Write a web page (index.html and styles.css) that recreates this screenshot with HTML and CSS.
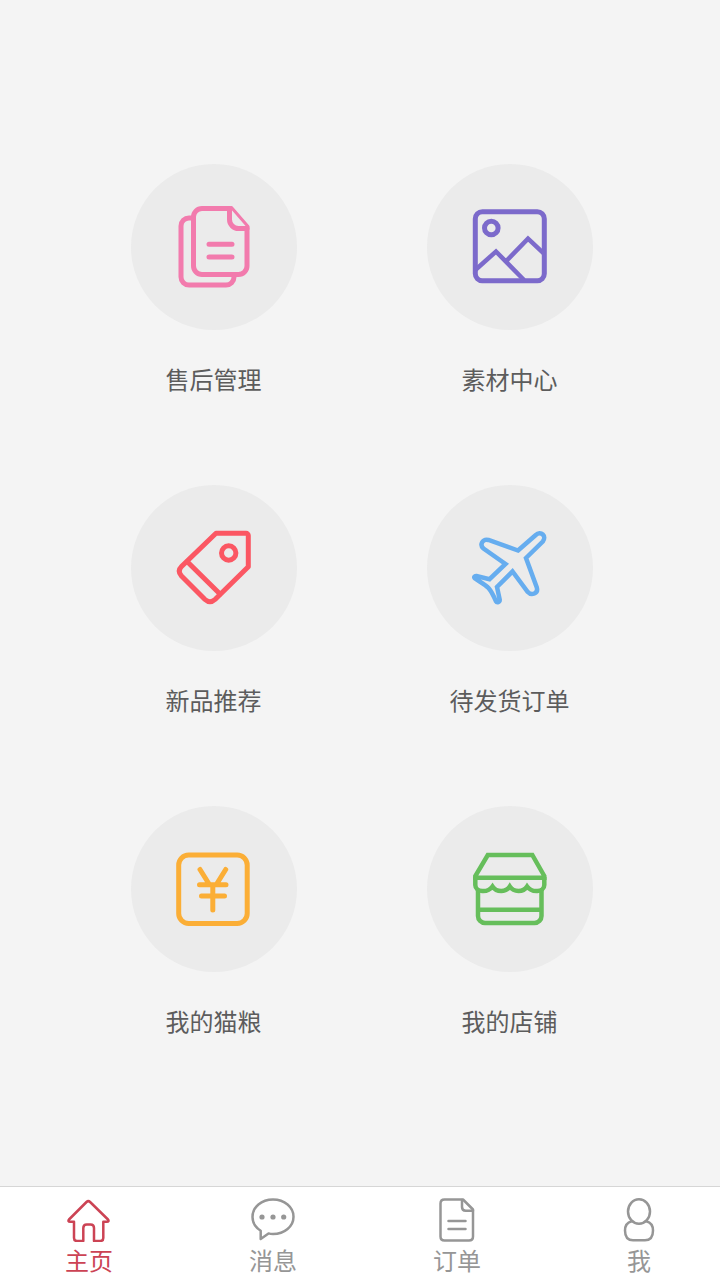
FILE: index.html
```
<!DOCTYPE html>
<html lang="zh-CN">

<head>
    <meta charset="UTF-8">
    <meta name="viewport" content="width=device-width, initial-scale=1.0">
    <title>主页</title>
    <link rel="stylesheet" href="styles.css">
</head>

<body>
    <main class="menu">
        <a class="item pink" href="#service">
            <span class="circle">
                <svg viewBox="0 0 166 166" aria-hidden="true">
                    <path d="M62 54h-4a8 8 0 0 0-8 8v51a8 8 0 0 0 8 8h37a8 8 0 0 0 8-8v-2" />
                    <path d="M99 44.5H71a8.5 8.5 0 0 0-8.5 8.5v49a8.5 8.5 0 0 0 8.5 8.5h36.5a8.5 8.5 0 0 0 8.5-8.5V64" />
                    <path d="M98.5 45v10.500a9 9 0 0 0 9 9h8.5M78 80.3h23M78 93h23" />
                    <path class="fold" d="M100.5 43.5L117 62.5" />
                </svg>
            </span>
            <span class="name">售后管理</span>
        </a>
        <a class="item purple" href="#material">
            <span class="circle">
                <svg viewBox="0 0 166 166" aria-hidden="true">
                    <rect x="48.3" y="47.7" width="69" height="69" rx="7" />
                    <circle cx="64.3" cy="64" r="6.8" />
                    <path class="sharp" d="M48.3 106L69 87.5l28 28.5M79 97.3l22-22.6 16.5 15.5" />
                </svg>
            </span>
            <span class="name">素材中心</span>
        </a>
        <a class="item red" href="#new">
            <span class="circle">
                <svg viewBox="0 0 166 166" aria-hidden="true">
                    <path d="M85 48.3h30a2.3 2.3 0 0 1 2.3 2.3V81.7L84 114.5q-5 4.5-10 0L50.5 91q-4.5-5 0-9.5z" />
                    <path d="M56.3 76.7L89 109" />
                    <circle cx="97.7" cy="68" r="7.2" />
                </svg>
            </span>
            <span class="name">新品推荐</span>
        </a>
        <a class="item blue" href="#shipping">
            <span class="circle">
                <svg viewBox="0 0 166 166" aria-hidden="true">
                    <path class="sharp" d="M91 65.5L108.500 50.2c5.500-5 11.500 1 7.300 6.300L99 73l10.800 29.5c1.700 6-5.300 8.500-9 4.500L85.500 86.5 70 102l2.700 12.500c.3 2.800-2.700 3.500-3.900 1.500-2.300-5.500-3.800-9-7.300-13-3.500-3.800-8.500-6-13.500-9.500-1.500-1.300-.5-2.700 1.500-2.500l13 3.200L78.500 79 56.500 63.500c-4.500-4-.5-10 5-8.500z" />
                </svg>
            </span>
            <span class="name">待发货订单</span>
        </a>
        <a class="item orange" href="#food">
            <span class="circle">
                <svg viewBox="0 0 166 166" aria-hidden="true">
                    <rect x="47.7" y="49" width="68.5" height="68.5" rx="10" />
                    <path d="M69 63.5l9.5 15.2M94.7 63.5l-9.500 15.2M68.5 78.7h26.5M70.5 90h23M81.8 79v25" />
                </svg>
            </span>
            <span class="name">我的猫粮</span>
        </a>
        <a class="item green" href="#shop">
            <span class="circle">
                <svg viewBox="0 0 166 166" aria-hidden="true">
                    <path class="sharp" d="M48.3 71.7V70l12.5-21h44.5L117.3 70v1.7zM51 84v26a7 7 0 0 0 7 7h49.5a7 7 0 0 0 7-7V84M51 103.7h63.5" />
                    <path class="sharp" d="M48.3 71v8c0 7.5 12.5 8 17.2 1.5 4 6 13.5 6 17.3 0 4 6 13.5 6 17.3 0 4.700 6.5 17.2 6 17.2-1.5v-8" />
                </svg>
            </span>
            <span class="name">我的店铺</span>
        </a>
    </main>

    <nav class="tabs">
        <a class="tab active" href="#home">
            <svg viewBox="0 0 44 44" aria-hidden="true">
                <path d="M19.5 4q1.8-1.7 3.6 0L41 21.5q1.5 2.2-1.2 2.3h-3.5V40q0 3-3 3H27V30q0-3.5-3.5-3.5h-3.7q-3.5 0-3.5 3.5v13H10q-3 0-3-3V23.8H3.2q-2.7-.1-1.2-2.3z" />
            </svg>
            <span>主页</span>
        </a>
        <a class="tab" href="#message">
            <svg viewBox="0 0 44 44" aria-hidden="true">
                <path d="M9.7 32.7C4.5 29.5 1.5 24.5 1.5 19 1.5 9 10.5 1.5 22 1.5S42.5 9 42.5 18.7 33.5 36 22 36q-2.5 0-4.5-.6L9.7 41z" />
                <g class="dots">
                    <circle cx="11" cy="19" r="2.6" />
                    <circle cx="22" cy="19" r="2.6" />
                    <circle cx="32.7" cy="19" r="2.6" />
                </g>
            </svg>
            <span>消息</span>
        </a>
        <a class="tab" href="#order">
            <svg viewBox="0 0 44 44" aria-hidden="true">
                <path d="M28 1.5H9.5q-4 0-4 4v33q0 4 4 4H34q4 0 4-4v-27z" />
                <path d="M27 2v7q0 3.7 3.7 3.7H38M13.5 23h17M13.5 31h17" />
            </svg>
            <span>订单</span>
        </a>
        <a class="tab" href="#me">
            <svg viewBox="0 0 44 44" aria-hidden="true">
                <ellipse cx="22" cy="13.5" rx="11" ry="12.2" />
                <path d="M14.7 23.3C10.5 24.5 8 28 8 32.5 8 39 10.5 42.3 16 42.3h12c5.5 0 8-3.3 8-9.8 0-4.5-2.5-8-6.7-9.2" />
            </svg>
            <span>我</span>
        </a>
    </nav>
</body>

</html>
```
FILE: styles.css
```
* {
    box-sizing: border-box;
}

body {
    margin: 0;
    min-height: 100vh;
    display: flex;
    flex-direction: column;
    background-color: #f4f4f4;
    font-family: "Noto Sans CJK SC", sans-serif;
    font-size: 24px;
    line-height: 30px;
}

a {
    color: inherit;
    text-decoration: none;
}

svg {
    display: block;
    fill: none;
    stroke: currentColor;
    stroke-linecap: round;
    stroke-linejoin: round;
}

.menu {
    flex: 1;
    display: grid;
    grid-template-columns: 166px 166px;
    justify-content: center;
    align-content: start;
    gap: 91px 130px;
    padding: 164px 0 90px 3px;
}

.item {
    display: flex;
    flex-direction: column;
    align-items: center;
    gap: 34px;
}

.circle {
    width: 166px;
    height: 166px;
    border-radius: 50%;
    background-color: #ebebeb;
}

.circle svg {
    stroke-width: 5px;
}

.circle .sharp {
    stroke-linecap: butt;
    stroke-linejoin: miter;
    stroke-width: 4.5px;
}

.circle .fold {
    stroke-width: 3px;
}

.name {
    color: #5c5c5c;
    white-space: nowrap;
}

.item.pink {
    color: #f27bad;
}

.item.purple {
    color: #7c6acb;
}

.item.red {
    color: #fb5763;
}

.item.blue {
    color: #66adef;
}

.item.orange {
    color: #fbae36;
}

.item.green {
    color: #66be5b;
}

.tabs {
    display: flex;
    justify-content: space-between;
    padding: 11px 59px 5px 65px;
    border-top: 1px solid #d6d6d6;
    background-color: #fff;
}

.tab {
    display: flex;
    flex-direction: column;
    align-items: center;
    gap: 3px;
    color: #969696;
}

.tab svg {
    width: 44px;
    height: 44px;
    stroke-width: 2.5px;
}

.tab .dots {
    fill: currentColor;
    stroke: none;
}

.tab.active {
    color: #cc4354;
}
```
